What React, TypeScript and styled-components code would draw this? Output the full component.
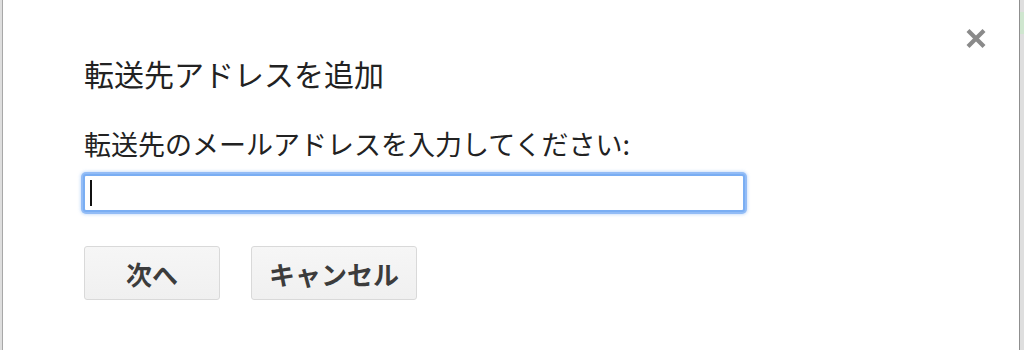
import React from 'react';
import styled, { createGlobalStyle } from 'styled-components';

const GlobalStyle = createGlobalStyle`
  html, body {
    margin: 0;
    padding: 0;
    height: 350px;
    overflow: hidden;
    background: #f4f4f4;
  }
  #root {
    height: 350px;
  }
`;

const Page = styled.div`
  display: flex;
  height: 350px;
  font-family: "Noto Sans CJK JP", "Noto Sans", sans-serif;
`;

const Edge = styled.div<{ $w: number }>`
  width: ${(p) => p.$w}px;
  flex: none;
  background: #dedede;
  display: flex;
  flex-direction: column;
  padding-top: 12px;
`;

const Peek = styled.div`
  height: 22px;
  background: #cfe6cf;
`;

const Dialog = styled.div`
  flex: 1;
  background: #fff;
  border-left: 1px solid #a8a8a8;
  border-right: 1px solid #8f8f8f;
  padding: 27px 32px 0 81px;
  display: flex;
  flex-direction: column;
`;

const Header = styled.div`
  display: flex;
  justify-content: space-between;
  align-items: flex-start;
`;

const Title = styled.h1`
  margin: 28px 0 0;
  font-size: 30px;
  line-height: 36px;
  font-weight: 400;
  color: #222;
`;

const Close = styled.button`
  border: 0;
  background: none;
  padding: 0;
  width: 22px;
  height: 23px;
  cursor: pointer;
  display: flex;
`;

const Label = styled.label`
  margin-top: 37px;
  font-size: 27px;
  line-height: 32px;
  color: #222;
`;

const FieldWrap = styled.div`
  position: relative;
  margin-top: 14px;
  width: 662px;
  margin-left: -1px;
`;

const Input = styled.input`
  box-sizing: border-box;
  display: block;
  width: 100%;
  height: 38px;
  border: 2px solid #7aaef3;
  border-radius: 3px;
  box-shadow: 0 0 0 2px rgba(110, 166, 242, 0.65), 0 0 3px 3px rgba(140, 186, 246, 0.4);
  outline: none;
  caret-color: transparent;
  font-size: 20px;
  padding: 0 6px;
`;

const Caret = styled.span`
  position: absolute;
  left: 7px;
  top: 6px;
  width: 2px;
  height: 26px;
  background: #111;
`;

const Actions = styled.div`
  display: flex;
  gap: 31px;
  margin-top: 34px;
`;

const Button = styled.button<{ $min?: number }>`
  box-sizing: border-box;
  height: 54px;
  min-width: ${(p) => p.$min ?? 0}px;
  padding: 0 17px;
  border: 1px solid #d9d9d9;
  border-radius: 3px;
  background: linear-gradient(#f6f6f6, #f0f0f0);
  color: #3c3c3c;
  font-family: "Noto Sans CJK JP", "Noto Sans", sans-serif;
  font-size: 26px;
  font-weight: 700;
  cursor: pointer;
`;

export default function App() {
  return (
    <>
      <GlobalStyle />
      <Page>
        <Edge $w={2} />
        <Dialog>
          <Header>
            <Title>転送先アドレスを追加</Title>
            <Close aria-label="閉じる">
              <svg width="22" height="23" viewBox="0 0 22 23">
                <path d="M3 3.5 L19 19.5 M19 3.5 L3 19.5" stroke="#8a8a8a" strokeWidth="4.2" strokeLinecap="butt" />
              </svg>
            </Close>
          </Header>
          <Label htmlFor="fwd">転送先のメールアドレスを入力してください:</Label>
          <FieldWrap>
            <Input id="fwd" type="text" />
            <Caret />
          </FieldWrap>
          <Actions>
            <Button $min={136}>次へ</Button>
            <Button>キャンセル</Button>
          </Actions>
        </Dialog>
        <Edge $w={4}>
          <Peek />
        </Edge>
      </Page>
    </>
  );
}
